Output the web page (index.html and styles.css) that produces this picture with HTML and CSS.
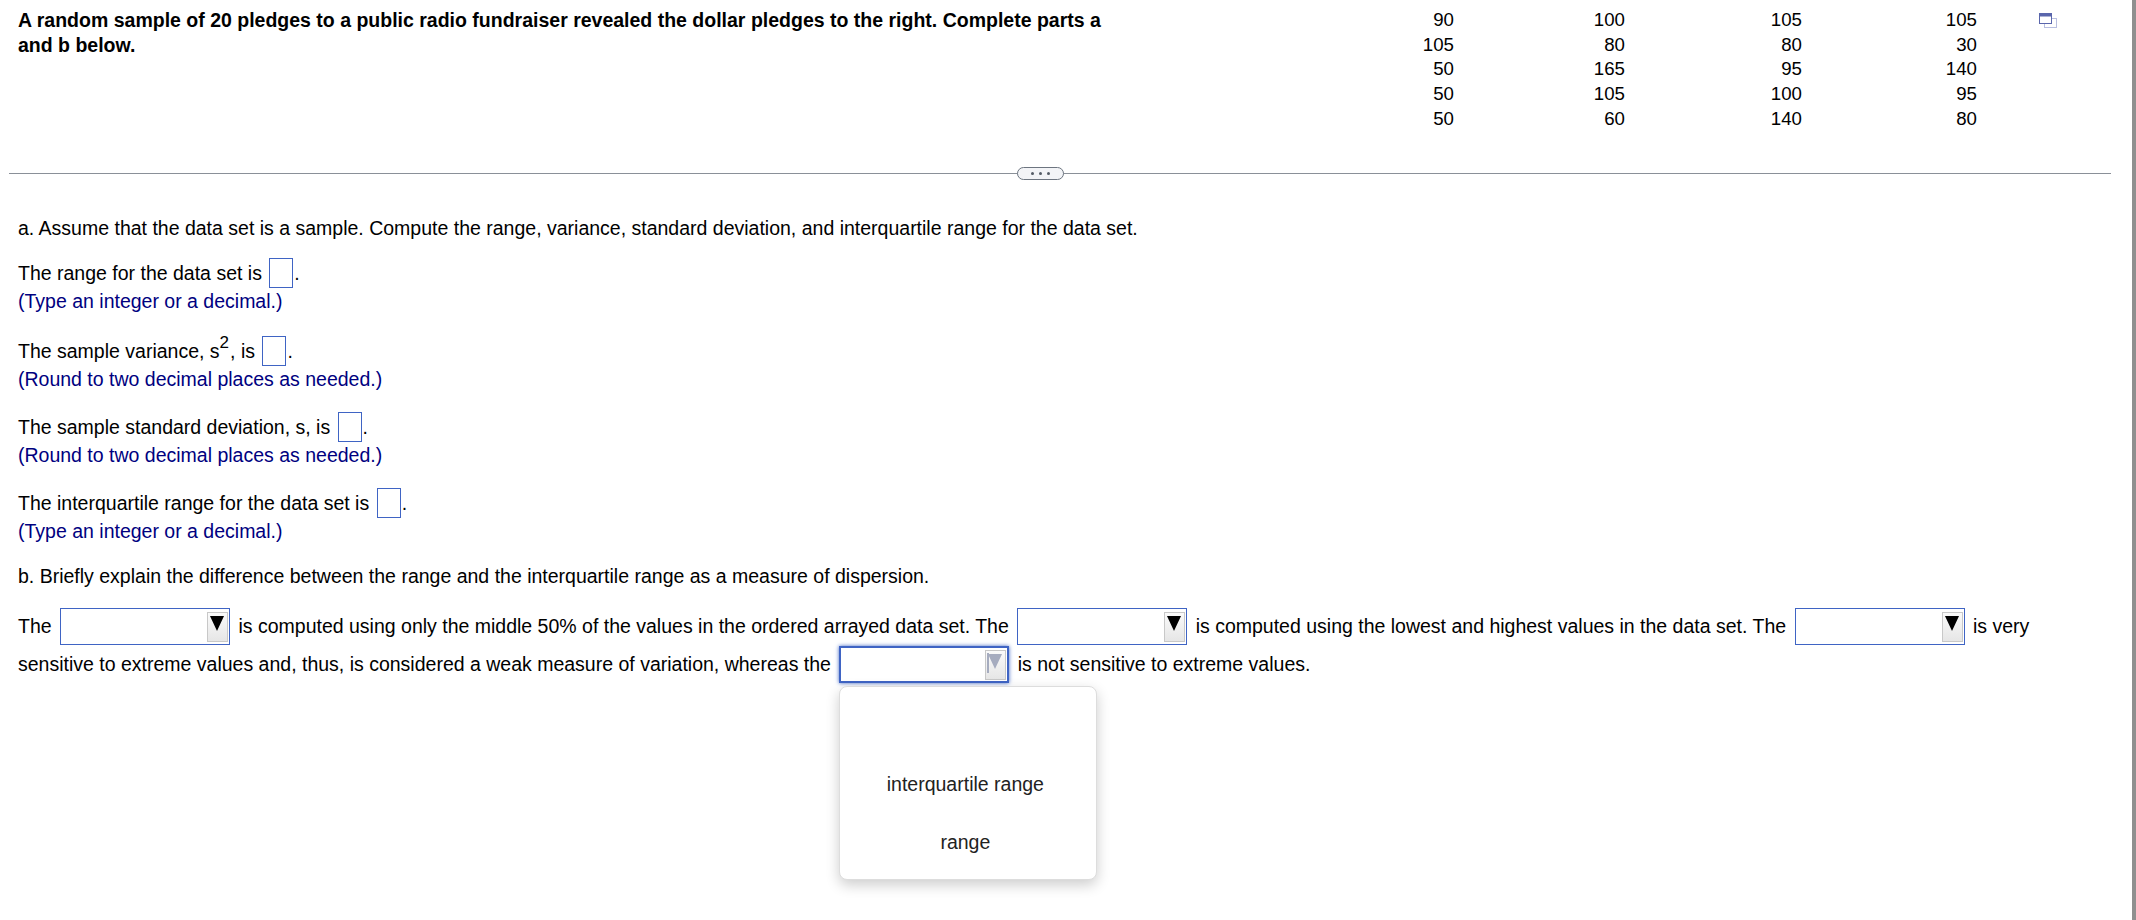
FILE: index.html
```html
<!DOCTYPE html>
<html lang="en">
<head>
    <meta charset="UTF-8">
    <title>Pledges question</title>
    <link rel="stylesheet" href="styles.css">
</head>
<body>
    <div class="question-head">
        <p class="prompt">A random sample of 20 pledges to a public radio fundraiser revealed the dollar pledges to the right. Complete parts a and b below.</p>
        <div class="data-table">
            <div class="data-col"><span>90</span><span>105</span><span>50</span><span>50</span><span>50</span></div>
            <div class="data-col"><span>100</span><span>80</span><span>165</span><span>105</span><span>60</span></div>
            <div class="data-col"><span>105</span><span>80</span><span>95</span><span>100</span><span>140</span></div>
            <div class="data-col"><span>105</span><span>30</span><span>140</span><span>95</span><span>80</span></div>
        </div>
        <svg class="popout-icon" width="18" height="15" viewBox="0 0 18 15">
            <rect x="5.5" y="5.5" width="12" height="9" fill="#fff" stroke="#b9bfe0"/>
            <rect x="0.5" y="0.5" width="12" height="10" fill="#fff" stroke="#5a66ac"/>
            <rect x="0" y="0" width="13" height="3.5" fill="#5a66ac"/>
        </svg>
    </div>

    <div class="divider"><span class="more-pill"><i></i><i></i><i></i></span></div>

    <p class="part-title">a. Assume that the data set is a sample. Compute the range, variance, standard deviation, and interquartile range for the data set.</p>

    <div class="answer">
        <p>The range for the data set is <span class="blank"></span>.</p>
        <p class="hint">(Type an integer or a decimal.)</p>
    </div>
    <div class="answer tall">
        <p>The sample variance, s<sup>2</sup>, is <span class="blank"></span>.</p>
        <p class="hint">(Round to two decimal places as needed.)</p>
    </div>
    <div class="answer">
        <p>The sample standard deviation, s, is <span class="blank"></span>.</p>
        <p class="hint">(Round to two decimal places as needed.)</p>
    </div>
    <div class="answer">
        <p>The interquartile range for the data set is <span class="blank"></span>.</p>
        <p class="hint">(Type an integer or a decimal.)</p>
    </div>

    <p class="part-b">b. Briefly explain the difference between the range and the interquartile range as a measure of dispersion.</p>

    <p class="explain">The <span class="select"><span class="arrow"></span></span> is computed using only the middle 50% of the values in the ordered arrayed data set. The <span class="select"><span class="arrow"></span></span> is computed using the lowest and highest values in the data set. The <span class="select"><span class="arrow"></span></span> is very sensitive to extreme values and, thus, is considered a weak measure of variation, whereas the <span class="select-wrap"><span class="select focused"><span class="arrow"></span></span><span class="menu"><span>interquartile range</span><span>range</span></span></span> is not sensitive to extreme values.</p>
</body>
</html>
```

FILE: styles.css
```css
html {
    height: 100%;
    overflow: hidden;
    box-sizing: border-box;
    border-right: 4px solid #8f8f8f;
}

body {
    font-family: 'Liberation Sans', Arial, sans-serif;
    font-size: 19.5px;
    line-height: 25px;
    color: #000;
    background: #fff;
    margin: 0;
    padding: 0 21px 0 18px;
    height: 100%;
    box-sizing: border-box;
}

p {
    margin: 0;
}

.question-head {
    display: flex;
    padding-top: 8px;
    height: 173px;
    box-sizing: border-box;
}

.prompt {
    width: 1110px;
    font-weight: bold;
}

.data-table {
    display: flex;
    margin-left: 326px;
    font-size: 18.67px;
    line-height: 24.7px;
}

.data-col {
    display: flex;
    flex-direction: column;
    align-items: flex-end;
    width: 175px;
}

.data-col:first-child {
    width: 0;
}

.data-col:nth-child(2) {
    width: 171px;
}

.data-col:nth-child(3) {
    width: 177px;
}

.popout-icon {
    margin: 5px 0 0 62px;
}

.divider {
    position: relative;
    height: 1px;
    margin: 0 0 0 -9px;
    background: #8a9098;
}

.more-pill {
    position: absolute;
    left: 1008px;
    top: -6px;
    width: 47px;
    height: 13px;
    box-sizing: border-box;
    border: 1px solid #6d7580;
    border-radius: 7px;
    background: #f3f4f7;
    display: flex;
    justify-content: center;
    align-items: center;
    gap: 5px;
}

.more-pill i {
    width: 3px;
    height: 3px;
    border-radius: 50%;
    background: #555c66;
}

.part-title {
    margin-top: 42px;
}

.answer {
    margin-top: 19px;
}

.part-title + .answer {
    margin-top: 17px;
}

.answer.tall {
    margin-top: 21px;
}

.answer p {
    line-height: 30px;
}

.answer .hint {
    padding-top: 1px;
    color: #00007f;
    line-height: 25.5px;
}

sup {
    font-size: 17px;
    line-height: 0;
    vertical-align: 10px;
    margin-right: 1px;
}

.blank {
    display: inline-block;
    width: 24px;
    height: 30px;
    box-sizing: border-box;
    margin: -3px 1px 0 2px;
    border: 1px solid #3f64c4;
    vertical-align: middle;
}

.part-b {
    margin-top: 20px;
}

.explain {
    margin-top: 18px;
    padding-right: 60px;
    line-height: 38px;
}

.select-wrap {
    position: relative;
    display: inline-block;
    margin: 0 3px;
}

.select {
    display: inline-flex;
    justify-content: flex-end;
    align-items: center;
    width: 170px;
    height: 37px;
    box-sizing: border-box;
    padding-right: 1px;
    margin: -3px 3px 0;
    border: 1px solid #3f64c4;
    background: #fff;
    vertical-align: middle;
}

.select-wrap .select {
    margin: -3px 0 0;
}

.arrow {
    position: relative;
    width: 21px;
    height: 30px;
    box-sizing: border-box;
    border: 1px solid #c8c8c8;
    background: linear-gradient(#fafafa, #e6e6e6);
}

.arrow::after {
    content: "";
    position: absolute;
    left: 2px;
    top: 3px;
    border-left: 7px solid transparent;
    border-right: 7px solid transparent;
    border-top: 15px solid #000;
}

.select.focused {
    border: 2px solid #3f64c4;
    box-shadow: 0 0 4px #3f64c4;
}

.select.focused .arrow::before {
    content: "";
    position: absolute;
    left: 1px;
    top: 2px;
    width: 2px;
    height: 20px;
    background: #a6acbf;
}

.select.focused .arrow::after {
    border-top-color: #a6acbf;
}

.menu {
    position: absolute;
    left: 0;
    top: 41px;
    width: 258px;
    height: 194px;
    box-sizing: border-box;
    padding: 78px 6px 0 0;
    display: flex;
    flex-direction: column;
    align-items: center;
    gap: 20px;
    color: #222;
    background: #fff;
    border: 1px solid #ddd;
    border-radius: 8px;
    box-shadow: 0 5px 14px rgba(0, 0, 0, 0.2);
}
```
